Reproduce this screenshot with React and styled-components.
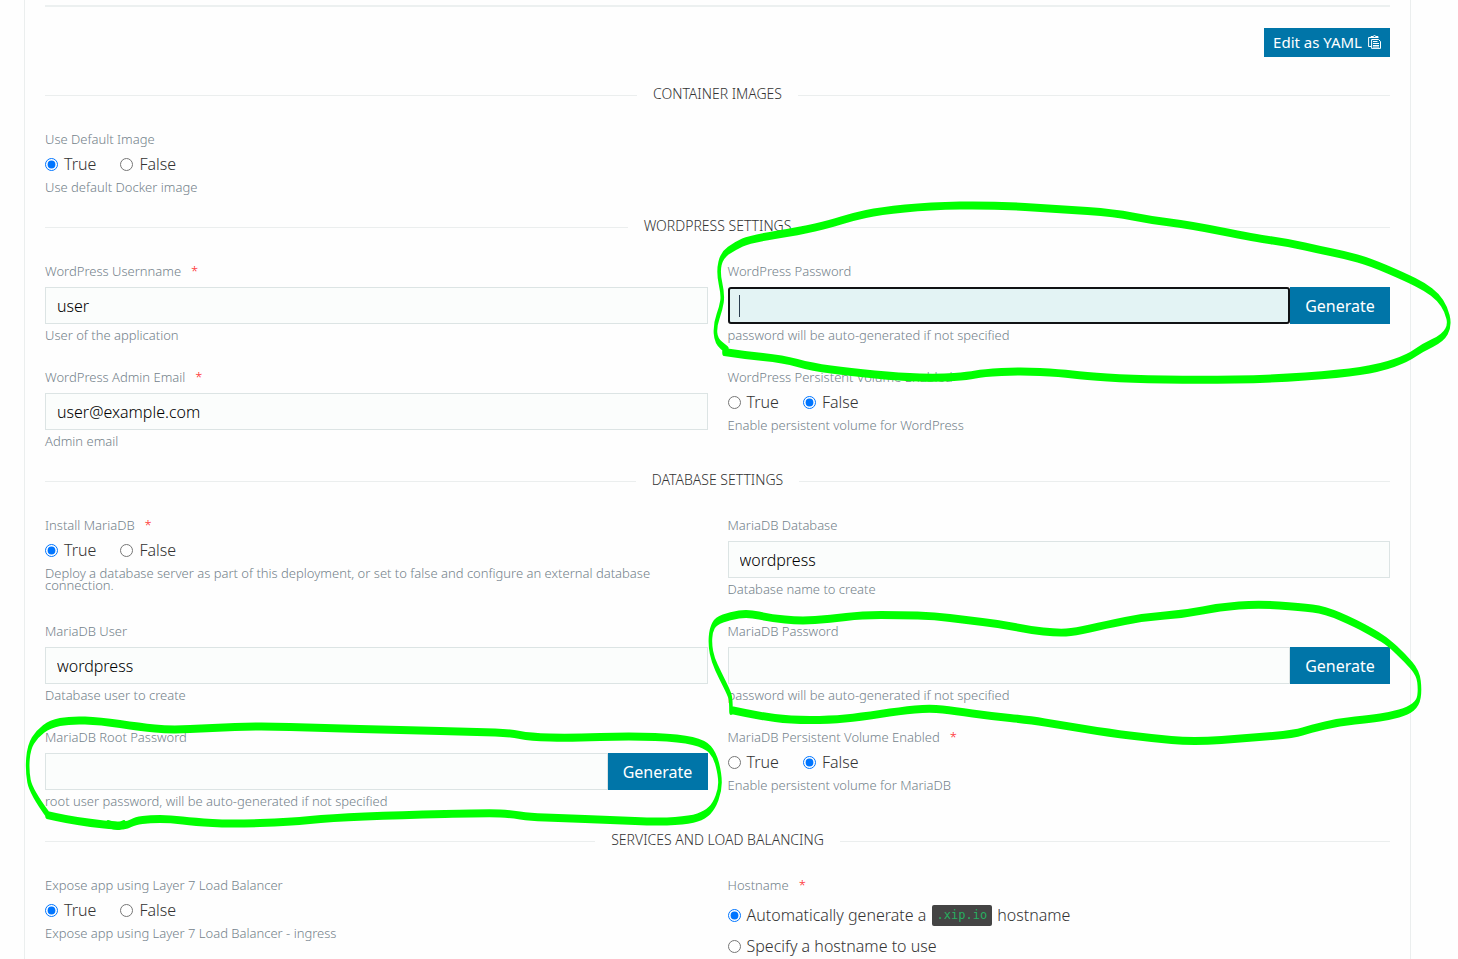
import React from 'react';
import styled, { createGlobalStyle } from 'styled-components';

const GlobalStyle = createGlobalStyle`
  *, *::before, *::after { box-sizing: border-box; }
  body {
    margin: 0;
    background: #fefefe;
    color: #333;
    font-family: "Noto Sans", "Open Sans", sans-serif;
    font-size: 16px;
    font-weight: 300;
    line-height: 20px;
  }
`;

const Page = styled.div`
  position: relative;
  min-height: 100vh;
  padding: 0 47px 0 24px;
  overflow: hidden;
`;

const Panel = styled.form`
  min-height: 100vh;
  padding: 5px 20px 0;
  border: solid #ebeeee;
  border-width: 0 1px;
`;

const Rule = styled.hr`
  height: 2px;
  margin: 0 0 21px;
  border: 0;
  background: #ecf0f0;
`;

const Toolbar = styled.div`
  display: flex;
  justify-content: flex-end;
  margin-bottom: 27px;
`;

const Button = styled.button`
  flex: none;
  display: flex;
  align-items: center;
  justify-content: center;
  gap: 6px;
  border: 0;
  background: #0075a8;
  color: #fff;
  font: inherit;
  font-weight: 400;
  cursor: pointer;
`;

const YamlButton = styled(Button)`
  height: 29px;
  padding: 0 9px 1px;
  font-size: 15px;
`;

const GenerateButton = styled(Button)`
  width: 100px;
  height: 37px;
`;

const Section = styled.section`
  margin-bottom: 23px;
`;

const Heading = styled.h2`
  display: flex;
  align-items: center;
  gap: 16px;
  margin: 0 0 25px;
  font-size: 14px;
  font-weight: 300;
  line-height: 20px;
  text-transform: uppercase;

  &::before, &::after {
    content: "";
    flex: 1;
    height: 1px;
    margin-top: 2px;
    background: #ebeeee;
  }
`;

const Grid = styled.div`
  display: grid;
  grid-template-columns: 1fr 1fr;
  gap: 26px 20px;
`;

const FieldBox = styled.div`
  min-width: 0;
`;

const Group = styled.fieldset`
  min-width: 0;
  margin: 0;
  padding: 0;
  border: 0;
`;

const Label = styled.label`
  display: block;
  color: #74828b;
  font-size: 13px;
  line-height: 20px;
`;

const Legend = styled(Label)`
  padding: 0;
`;

const Required = styled.span`
  margin-left: 10px;
  color: #f22;
`;

const Control = styled.div`
  display: flex;
  margin-top: 6px;
`;

const Input = styled.input`
  flex: 1;
  min-width: 0;
  height: 37px;
  padding: 0 11px;
  border: 1px solid #dce4e4;
  border-radius: 0;
  outline: 0;
  background: #fbfdfc;
  color: #000;
  font: inherit;

  ${({ $active }) => $active && `
    border: 2px solid #101214;
    border-radius: 3px;
    background: linear-gradient(#2c3e50, #2c3e50) 9px center / 1px 22px no-repeat #e3f3f4;
    caret-color: transparent;
  `}
`;

const Help = styled.p`
  margin: 5px 0 0;
  color: #74828b;
  font-size: 13px;
  line-height: 12px;
`;

const Options = styled.div`
  display: flex;
  flex-direction: ${({ $stacked }) => ($stacked ? 'column' : 'row')};
  gap: ${({ $stacked }) => ($stacked ? '10px' : '24px')};
  margin-top: ${({ $stacked }) => ($stacked ? '10px' : '5px')};

  & + ${Help} { margin-top: 7px; }
`;

const Option = styled.label`
  display: flex;
  align-items: center;
  gap: 6px;
`;

const Radio = styled.input`
  flex: none;
  width: 13px;
  height: 13px;
  margin: 0;
`;

const Code = styled.code`
  display: inline-block;
  margin: 0 1px;
  padding: 0 5px;
  border-radius: 2px;
  background: #444;
  color: #27ae60;
  font: 12px/21px "DejaVu Sans Mono", monospace;
  vertical-align: top;
`;

const Ink = styled.svg`
  position: absolute;
  top: 0;
  left: 0;
  pointer-events: none;
`;

function PasteIcon() {
  return (
    <svg width="13" height="14" viewBox="0 0 13 14" fill="none" stroke="#fff" aria-hidden="true">
      <path d="M3 11.5H.6V2.5H3M3 2.5V1.5H5Q6.500-.5 8 1.500H10V3M3 2.500H10" />
      <path d="M3.600 4.500H10.500L12.500 6.500V13.400H3.600Z" />
      <path d="M5 6.500H9.500M5 8.500H11M5 10.500H11M5 12H11" />
    </svg>
  );
}

function TextField({ id, label, required, value, help, generate, active }) {
  return (
    <FieldBox>
      <Label htmlFor={id}>{label}{required && <Required>*</Required>}</Label>
      <Control>
        <Input id={id} type="text" defaultValue={value} $active={active} />
        {generate && <GenerateButton type="button">Generate</GenerateButton>}
      </Control>
      <Help>{help}</Help>
    </FieldBox>
  );
}

function RadioField({ name, label, required, options = ['True', 'False'], selected = 0, stacked, help }) {
  return (
    <Group>
      <Legend as="legend">{label}{required && <Required>*</Required>}</Legend>
      <Options $stacked={stacked}>
        {options.map((text, i) => (
          <Option key={i}>
            <Radio type="radio" name={name} defaultChecked={i === selected} />
            <span>{text}</span>
          </Option>
        ))}
      </Options>
      {help && <Help>{help}</Help>}
    </Group>
  );
}

// The marker has an elliptical nib: narrow across, tall up and down.
const NIB = 0.45;

const STROKES = [
  [[724,352],[743,355],[783,359],[812,367],[850,372],[900,377],[940,378],[968,376],[983,373],[1020,371],[1060,373],[1085,376],[1130,379],[1200,380],[1270,379],[1340,374],[1380,368],[1408,358],[1422,348],[1443,338],[1450,325],[1446,309],[1438,297],[1425,287],[1405,277],[1370,262],[1345,255],[1320,250],[1290,243],[1255,238],[1190,225],[1150,220],[1115,213],[1060,209],[990,205],[930,206],[880,211],[852,217],[830,224],[800,231],[750,239],[735,246],[722,255],[718,272],[723,295],[721,308],[715,325],[716,341],[727,350]],
  [[731,711],[731,700],[729,693],[720,675],[713,660],[710,645],[711,630],[716,621],[730,616],[748,613],[770,618],[800,621],[830,619],[862,615],[900,615],[935,616],[965,620],[1000,624],[1030,630],[1057,633],[1075,632],[1105,625],[1145,617],[1185,614],[1220,607],[1258,604],[1300,607],[1325,610],[1355,623],[1375,634],[1388,642],[1405,658],[1418,673],[1420,690],[1418,703],[1408,711],[1390,716],[1370,719],[1340,722],[1310,729],[1295,734],[1250,738],[1193,742],[1150,738],[1110,733],[1060,725],[1030,720],[990,716],[955,711],[930,708],[900,711],[860,717],[830,720],[790,720],[760,716],[731,710]],
  [[48,815],[31,792],[27,770],[29,747],[37,734],[50,724],[70,720],[100,721],[140,727],[170,730],[210,728],[260,726],[320,728],[400,730],[480,732],[510,733],[530,737],[570,738],[630,736],[680,738],[705,744],[715,755],[720,775],[720,790],[714,806],[705,815],[690,820],[660,822],[610,820],[560,818],[530,817],[510,814],[490,813],[400,815],[330,818],[290,822],[230,824],[195,822],[170,819],[150,819],[135,821],[128,825],[118,826],[90,823],[65,819],[47,815]],
  [[108,824],[117,827],[124,824]],
];

function smooth(points) {
  const at = ([x, y]) => `${(x / NIB).toFixed(1)} ${y}`;
  const mid = (a, b) => [(a[0] + b[0]) / 2, (a[1] + b[1]) / 2];
  let d = `M${at(points[0])}`;
  for (let i = 1; i < points.length - 1; i += 1) {
    d += `Q${at(points[i])} ${at(mid(points[i], points[i + 1]))}`;
  }
  return `${d}L${at(points[points.length - 1])}`;
}

function MarkerInk() {
  return (
    <Ink width="1458" height="959" viewBox="0 0 1458 959" aria-hidden="true">
      <g transform={`scale(${NIB} 1)`} fill="none" stroke="#0f0" strokeWidth="8" strokeLinejoin="round" strokeLinecap="round">
        {STROKES.map((points, i) => <path key={i} d={smooth(points)} />)}
      </g>
    </Ink>
  );
}

export default function App() {
  return (
    <Page>
      <GlobalStyle />
      <Panel>
        <Rule />
        <Toolbar>
          <YamlButton type="button">Edit as YAML <PasteIcon /></YamlButton>
        </Toolbar>

        <Section>
          <Heading>Container Images</Heading>
          <Grid>
            <RadioField name="default-image" label="Use Default Image" help="Use default Docker image" />
          </Grid>
        </Section>

        <Section>
          <Heading>WordPress Settings</Heading>
          <Grid>
            <TextField id="wp-user" label="WordPress Usernname" required value="user" help="User of the application" />
            <TextField id="wp-password" label="WordPress Password" generate active help="password will be auto-generated if not specified" />
            <TextField id="wp-email" label="WordPress Admin Email" required value="user@example.com" help="Admin email" />
            <RadioField name="wp-volume" label="WordPress Persistent Volume Enabled" selected={1} help="Enable persistent volume for WordPress" />
          </Grid>
        </Section>

        <Section>
          <Heading>Database Settings</Heading>
          <Grid>
            <RadioField name="install-db" label="Install MariaDB" required help="Deploy a database server as part of this deployment, or set to false and configure an external database connection." />
            <TextField id="db-name" label="MariaDB Database" value="wordpress" help="Database name to create" />
            <TextField id="db-user" label="MariaDB User" value="wordpress" help="Database user to create" />
            <TextField id="db-password" label="MariaDB Password" generate help="password will be auto-generated if not specified" />
            <TextField id="db-root" label="MariaDB Root Password" generate help="root user password, will be auto-generated if not specified" />
            <RadioField name="db-volume" label="MariaDB Persistent Volume Enabled" required selected={1} help="Enable persistent volume for MariaDB" />
          </Grid>
        </Section>

        <section>
          <Heading>Services and Load Balancing</Heading>
          <Grid>
            <RadioField name="expose" label="Expose app using Layer 7 Load Balancer" help="Expose app using Layer 7 Load Balancer - ingress" />
            <RadioField
              name="hostname"
              label="Hostname"
              required
              stacked
              options={[<>Automatically generate a <Code>.xip.io</Code> hostname</>, 'Specify a hostname to use']}
            />
          </Grid>
        </section>
      </Panel>
      <MarkerInk />
    </Page>
  );
}
